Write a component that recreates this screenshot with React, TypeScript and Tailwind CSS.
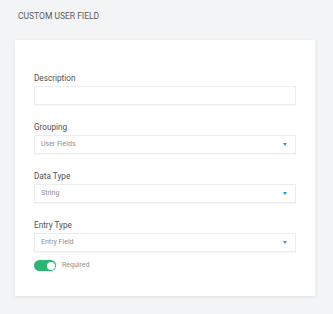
import React from 'react'

const Caret = () => (
  <svg width="4" height="3" viewBox="0 0 4 3" className="shrink-0">
    <path d="M0 0 H4 L2 3 Z" fill="#2196f3" />
  </svg>
)

function Field({ label, children }: { label: string; children: React.ReactNode }) {
  return (
    <div className="flex flex-col">
      <label className="text-[8.2px] leading-[10px] text-[#505050]">{label}</label>
      <div className="mt-[3px] flex h-[19px] items-center justify-between border border-[#ececec] bg-white pl-[6px] pr-[8px] shadow-[0_1px_1px_rgba(0,0,0,0.03)]">
        {children}
      </div>
    </div>
  )
}

function Select({ label, value }: { label: string; value: string }) {
  return (
    <Field label={label}>
      <span className="text-[7px] text-[#909090]">{value}</span>
      <Caret />
    </Field>
  )
}

export default function App() {
  return (
    <div className="h-[314px] w-[333px] bg-[#f3f4f6] font-['Roboto',sans-serif]">
      <div className="px-[18px] pt-[10px] text-[8.5px] leading-[12px] uppercase text-[#5a5a5a]">
        Custom User Field
      </div>
      <div className="ml-[15px] mt-[18px] flex h-[256px] w-[300px] flex-col gap-[17px] bg-white px-[19px] pt-[33px] shadow-[0_1px_4px_rgba(0,0,0,0.08)]">
        <Field label="Description">
          <span />
        </Field>
        <Select label="Grouping" value="User Fields" />
        <Select label="Data Type" value="String" />
        <div className="flex flex-col">
          <Select label="Entry Type" value="Entry Field" />
          <div className="mt-[8px] flex items-center gap-[6px]">
            <div className="flex h-[11px] w-[22px] items-center justify-end rounded-full bg-[#2bb673] px-[1.5px]">
              <div className="h-[8px] w-[8px] rounded-full bg-white" />
            </div>
            <span className="text-[7px] text-[#909090]">Required</span>
          </div>
        </div>
      </div>
    </div>
  )
}
